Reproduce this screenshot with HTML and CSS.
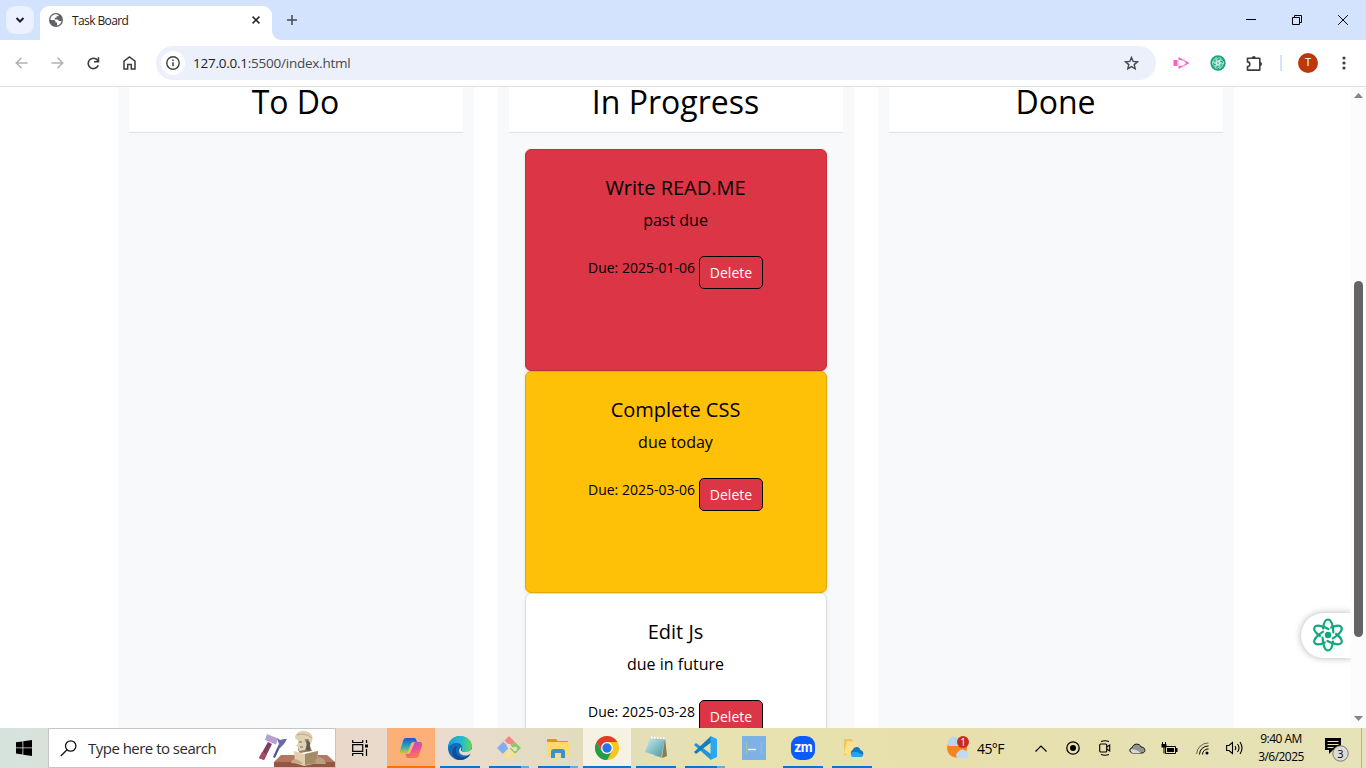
FILE: index.html
```html
<!DOCTYPE html>
<html lang="en">
<head>
<meta charset="utf-8">
<title>Task Board</title>
<link rel="stylesheet" href="styles.css">
</head>
<body>
<header class="tabstrip">
  <button class="tab-search"><svg width="10" height="8" viewBox="0 0 10 8"><path d="M1.500 2l3.500 3.500L8.500 2" fill="none" stroke="#1f2023" stroke-width="2"/></svg></button>
  <div class="tab">
    <svg width="14" height="14" viewBox="0 0 14 14"><circle cx="7" cy="7" r="7" fill="#5f6368"/><path d="M6.300 1.300C3 2 1.300 4.300 1.400 7h3c1.600 0 2.100.8 2.100 1.800v.8H8v3c2.700-.6 4.400-2.600 4.600-5.200-.8.6-1.700.9-2.600.5-.8-.3-.6-1.200-1.400-1.400H5.800V4.800h1.700V3.300h2V2C8.500 1.400 7.300 1.200 6.300 1.300z" fill="#fff"/><path d="M1.500 7.500l3.500 3.300v1.700C3 12 1.700 10 1.500 7.500z" fill="#5f6368"/></svg>
    <span class="tab-title">Task Board</span>
    <svg class="tab-close" width="8" height="8" viewBox="0 0 8 8"><path d="M.6.6l6.800 6.800M7.400.6L.6 7.400" stroke="#1f2023" stroke-width="1.500"/></svg>
  </div>
  <svg class="tab-foot" width="9" height="9"><path d="M0 0a9 9 0 0 0 9 9H0z" fill="#fff"/></svg>
  <svg class="new-tab" width="10" height="10" viewBox="0 0 10 10"><path d="M5 0v10M0 5h10" stroke="#474747" stroke-width="1.500"/></svg>
  <div class="window-controls">
    <span><svg width="10" height="10"><path d="M0 4.500h10" stroke="#000"/></svg></span>
    <span><svg width="10" height="10" fill="none" stroke="#000"><path d="M.5 2.500h7v7h-7zM2.500 2.500v-2h7v7h-2"/></svg></span>
    <span><svg width="10" height="10"><path d="M.2.2l9.600 9.600M9.800.2L.2 9.800" stroke="#000"/></svg></span>
  </div>
</header>
<div class="toolbar">
  <span class="nav-btn"><svg width="13" height="12" viewBox="0 0 13 12" fill="none" stroke="#b0b1b3" stroke-width="1.500"><path d="M12.500 6H1.500M6.500.8L1.300 6l5.200 5.200"/></svg></span>
  <span class="nav-btn"><svg width="13" height="12" viewBox="0 0 13 12" fill="none" stroke="#b0b1b3" stroke-width="1.500"><path d="M.5 6h11M6.500.8L11.700 6l-5.200 5.200"/></svg></span>
  <span class="nav-btn"><svg width="13" height="13" viewBox="0 0 13 13"><path d="M11.300 8.300A5.200 5.200 0 1 1 10.500 3.200L11.800 4.700" fill="none" stroke="#3c3d40" stroke-width="1.600"/><path d="M12.200.3v5.200H7V4h3.600V.3z" fill="#3c3d40"/></svg></span>
  <span class="nav-btn"><svg width="13" height="14" viewBox="0 0 13 14" fill="none" stroke="#3c3d40" stroke-width="1.500"><path d="M1 5.200L6.500 1 12 5.200V13H8.300V8.500H4.700V13H1z"/></svg></span>
  <div class="address">
    <span class="info"><svg width="14" height="14" viewBox="0 0 14 14"><circle cx="7" cy="7" r="6.200" fill="none" stroke="#3c3d40" stroke-width="1.400"/><path d="M7 6.300v4M7 3.500v1.500" stroke="#3c3d40" stroke-width="1.500"/></svg></span>
    <span class="url"><b>127.0.0.1</b>:5500/index.html</span>
    <svg class="star" width="15" height="14" viewBox="0 0 15 14"><path d="M7.500 1.400l1.700 4 4.300.4-3.300 2.800 1 4.200-3.700-2.200-3.700 2.200 1-4.200L1.500 5.800l4.300-.4z" fill="none" stroke="#45474a" stroke-width="1.400"/></svg>
  </div>
  <div class="extensions">
    <svg width="17" height="14" viewBox="0 0 17 14"><path d="M.5 4h4v6h-4z" fill="#fc63c0"/><path d="M5.500.9L16.500 7 5.500 13.100V10H7.500l1.500-.8V4.800L7.500 4h-2z" fill="#fc63c0"/><path d="M8 4.500h2.500L13 7l-2.500 2.500H8z" fill="#fff"/><path d="M4.500 4.600h1.200v4.800H4.500z" fill="#fdb5e0"/></svg>
    <svg width="16" height="16" viewBox="-8 -8 16 16"><circle r="7.700" fill="#19a37f"/><g fill="none" stroke="#d5f3ea" stroke-width=".8"><path id="knot" d="M-1.200 1.800V-3C-1-5.800 3-5.800 4-3.600M-1.200-1.500L3-4"/><use href="#knot" transform="rotate(60)"/><use href="#knot" transform="rotate(120)"/><use href="#knot" transform="rotate(180)"/><use href="#knot" transform="rotate(240)"/><use href="#knot" transform="rotate(300)"/></g></svg>
    <svg width="17" height="17" viewBox="0 0 17 17"><path d="M1.500 3.200h12.300v11.900H1.500v-3.600a2.300 2.300 0 0 0 0-4.600z" fill="none" stroke="#3c3d40" stroke-width="1.600" stroke-linejoin="round"/><path d="M5.800 3a2 2 0 0 1 4 0zM14 7a2 2 0 0 1 0 4z" fill="#3c3d40"/></svg>
  </div>
  <span class="divider"></span>
  <span class="avatar">T</span>
  <svg class="more" width="4" height="14" viewBox="0 0 4 14" fill="#3c3d40"><circle cx="2" cy="2" r="1.600"/><circle cx="2" cy="7" r="1.600"/><circle cx="2" cy="12" r="1.600"/></svg>
</div>
<div class="viewport">
  <main class="board">
    <section class="lane"><h2>To Do</h2></section>
    <section class="lane">
      <h2>In Progress</h2>
      <div class="cards">
        <article class="card overdue"><h4>Write READ.ME</h4><p>past due</p><div class="due"><span>Due: 2025-01-06</span><button>Delete</button></div></article>
        <article class="card today"><h4>Complete CSS</h4><p>due today</p><div class="due"><span>Due: 2025-03-06</span><button>Delete</button></div></article>
        <article class="card"><h4>Edit Js</h4><p>due in future</p><div class="due"><span>Due: 2025-03-28</span><button>Delete</button></div></article>
      </div>
    </section>
    <section class="lane"><h2>Done</h2></section>
    <aside class="assistant"><svg width="34" height="36" viewBox="-17 -18 34 36"><circle r="3.200" fill="#10a77f"/><g fill="none" stroke="#10a77f" stroke-width="2.200" stroke-linecap="round"><path id="orbit" d="M-4.900-6.500C-4.300-12.500-2.500-15.500 0-15.500C3-15.500 5.300-10 5.400-2.500"/><use href="#orbit" transform="rotate(60)"/><use href="#orbit" transform="rotate(120)"/><use href="#orbit" transform="rotate(180)"/><use href="#orbit" transform="rotate(240)"/><use href="#orbit" transform="rotate(300)"/></g></svg></aside>
  </main>
  <div class="scrollbar">
    <svg width="9" height="5"><path d="M0 5L4.500 0 9 5z" fill="#858585"/></svg>
    <span class="thumb"></span>
    <svg width="9" height="5"><path d="M0 0h9L4.500 5z" fill="#858585"/></svg>
  </div>
</div>
<footer class="taskbar">
  <span class="start"><svg width="16" height="16" viewBox="0 0 16 16"><path d="M0 2.300l6.500-.9v6.100H0zM7.300 1.300L16 0v7.500H7.300zM0 8.300h6.500v6.200L0 13.600zM7.300 8.300H16V16l-8.700-1.300z"/></svg></span>
  <div class="search">
    <svg width="17" height="17" viewBox="0 0 17 17" fill="none" stroke="#111" stroke-width="1.300"><circle cx="10.700" cy="6" r="5.200"/><path d="M7 9.700L.8 16"/></svg>
    <span>Type here to search</span>
    <svg class="art" width="78" height="38" viewBox="0 0 78 38"><path d="M11 13l4 2-8 16-5-2z" fill="#7d3e60"/><path d="M5 23l5 2-3 6-5-2z" fill="#a44e61"/><path d="M10 5l11 4.500-2 6-11-4.500z" fill="#b4a1d2"/><path d="M22 15l2 1-6 13-2-1z" fill="#52528f"/><path d="M20 9l3 2 4-1 3 0-3 5-4 4-1-4z" fill="#6b6aa9"/><path d="M24 26h46l8 7H17z" fill="#b5775f"/><path d="M17 33h61v5H17z" fill="#955743"/><path d="M42 10l12 0-1 7 2 5-12 2-2-3z" fill="#8d8069"/><path d="M41 10l6-1 3 7-2 5-6 1-1-4-2-1 2-3z" fill="#dfd2b2"/><path d="M38 9C38 4 43 1 48 2c6 1 9 5 7 10l-1 3-3-5-11 1z" fill="#dfd2b2"/><path d="M40 6q8-3 15 3" fill="none" stroke="#b9a886"/><path d="M50 11l3 3 0 8-4-1z" fill="#625b4e"/><path d="M42 13h3M43 18h3" stroke="#766d5b"/><path d="M37 22l10 3 14-3-1 12-13 3-9-3z" fill="#e1cfac"/><path d="M48 25l13-3-1 12-12 2z" fill="#a28c6b"/><path d="M58 31q5-6 10 1l1 3H59z" fill="#b9a17d"/><path d="M34 34c1-5 7-5 12 1z" fill="#c3ab85"/></svg>
  </div>
  <span class="task-view"><svg width="17" height="16" viewBox="0 0 17 16" fill="none" stroke="#000" stroke-width="1.200"><path d="M.7 0v2.500h10V0M.7 4.700h10v6.600H.7zM.7 16v-2.500h10V16M14.500 0v3M14.500 9v7"/><path d="M13 4.500h3v3h-3z" fill="#000" stroke="none"/></svg></span>
  <nav class="apps">
    <span class="app copilot"><svg width="24" height="24" viewBox="0 0 24 24"><defs><linearGradient id="c1" x2="0" y2="1"><stop stop-color="#1b55d5"/><stop offset=".5" stop-color="#23a5bd"/><stop offset="1" stop-color="#e9c52e"/></linearGradient><linearGradient id="c2" x2=".3" y2="1"><stop stop-color="#a44bd7"/><stop offset=".6" stop-color="#ec5295"/><stop offset="1" stop-color="#f77952"/></linearGradient></defs><path d="M7 2h8c2 0 2.500 2 3 4h-3c-2 0-3 1-3.500 3L9 16c-.6 2-1 2-3 2H3C1 18 .7 16 1.200 14L4 5c.6-2 1.500-3 3-3z" fill="url(#c1)"/><path d="M17 22H9c-1.500 0-2-2-2.500-4H9c2 0 2.500-1 3-3l3-7c.6-2 1-2 3-2h3c2 0 2.300 2 2 4l-3 9c-.6 2-1.500 3-3 3z" fill="url(#c2)"/></svg></span>
    <span class="app run"><svg width="24" height="24" viewBox="0 0 24 24"><defs><linearGradient id="e1"><stop stop-color="#159ddc"/><stop offset=".6" stop-color="#29bec9"/><stop offset="1" stop-color="#68d84c"/></linearGradient></defs><circle cx="12" cy="12" r="12" fill="#126cbd"/><path d="M0 11C1 4 6 0 12 0c7 0 12 5 12 10 0 4-3 6-7 6-3 0-4-1-3-3 1-3-1-6-5-6-4 0-8 2-9 5z" fill="url(#e1)"/><path d="M9 10c-3 5 0 12 8 11l5-2c-4 5-10 6-14 4-6-4-4-12 1-13z" fill="#104d91"/><path d="M13.500 11c-1.500 3-.5 5 3.500 5 3 0 5-1 7-3v4l-2 1c-2 1-3 1.500-5 1.500-6 0-8-6-3.500-8.500z" fill="#e9d9c9"/></svg></span>
    <span class="app run multi"><svg width="24" height="24" viewBox="-12 -12 24 24"><path d="M0-12l6 6-6 6-6-6z" fill="#f48584"/><path d="M-6-6l6 6-6 6-6-6z" fill="#80adf4"/><path d="M6-6l6 6-6 6-6-6z" fill="#88cb62"/><path d="M0 0l6 6-6 6-6-6z" fill="#fee17f"/><path d="M-5-7l5 5v8M0-2l5 3" fill="none" stroke="#eadfce" stroke-width="1.500"/><g fill="#eadfce"><circle cy="-2" r="2.200"/><circle cy="6" r="2.200"/><circle cx="6" cy="1" r="2.200"/></g></svg></span>
    <span class="app run multi"><svg width="22" height="20" viewBox="0 0 22 20"><path d="M0 1h9l2 2h10v5H0z" fill="#d99c10"/><path d="M0 4h22v14H0z" fill="#ffd96b"/><path d="M4 20v-6c0-2 1-3 3-3h8c2 0 3 1 3 3v6h-4v-5H8v5z" fill="#3692d2"/></svg></span>
    <span class="app run active"><svg width="24" height="24" viewBox="-12 -12 24 24"><circle r="12" fill="#f9c51d"/><path d="M-10.400-6A12 12 0 0 1 10.400-6H0L-5.200 3z" fill="#e23b2f"/><path d="M-10.400-6A12 12 0 0 0 0 12L5.200 3-5.200 3z" fill="#249c4b"/><circle r="6" fill="#fff"/><circle r="4.700" fill="#2877e6"/></svg></span>
    <span class="app run"><svg width="24" height="24" viewBox="0 0 24 24"><defs><linearGradient id="n1" x2="1" y2="1"><stop stop-color="#d3ebe8"/><stop offset="1" stop-color="#3e98a8"/></linearGradient></defs><path d="M21 3l2 17-5 2-8-2z" fill="#c9bd94"/><path d="M6 2l15 1-4 18L1 16z" fill="url(#n1)"/><path d="M21 3l2 17-5 2z" fill="#867d5b"/><path d="M7 1.500l14 1" stroke="#fff" stroke-dasharray="1.500" stroke-width="2"/></svg></span>
    <span class="app run multi"><svg width="24" height="24" viewBox="0 0 24 24"><path d="M1 9l2-2L18 18v6z" fill="#2195db"/><path d="M18 0v6.500L3 18l-2-2z" fill="#147fbd"/><path d="M17.500 0L24 3v18l-6.500 3z" fill="#2ba8ef"/></svg></span>
    <span class="app"><svg width="24" height="24" viewBox="0 0 24 24"><path d="M0 0h24v24H0z" fill="#7eb2e6"/><path d="M4.500 6v12M19.500 6v12" stroke="#a2c4a1"/><path d="M6 13.500h8" stroke="#edf5ff" stroke-width="1.500"/></svg></span>
    <span class="app run"><span class="zoom-logo">zm</span></span>
    <span class="app run"><svg class="od" width="20" height="20" viewBox="0 0 20 20"><path d="M0 1h8l1 3h3v13H0z" fill="#efc45a"/><path d="M3 3l9 1v13l-7 1-5-3z" fill="#ffe091"/><path d="M10 19a4 4 0 0 1-1-7.500c2-4 7-2.500 7.300.5 4 .5 4 7 0 7z" fill="#0f78cc"/><path d="M7 17c0-4 6-4 9-1 3-1 4 2 1 3H9c-1 0-2-1-2-2z" fill="#2aa4ed"/></svg></span>
  </nav>
  <div class="tray">
    <span class="weather"><svg width="26" height="24" viewBox="0 0 26 24"><circle cx="12" cy="12" r="10" fill="#f48522"/><path d="M4 10a4 4 0 0 1 1-7 5 5 0 0 1 9 1l2 6z" fill="#b6d5f3"/><path d="M12 22a4 4 0 0 1 1-6 5 5 0 0 1 8-1 4 4 0 0 1 1 7z" fill="#bfdaf2"/><circle cx="18" cy="6" r="6" fill="#c92b1e"/><text x="18" y="10" text-anchor="middle" fill="#fff" font-size="10">1</text></svg></span>
    <span class="temp">45°F</span>
    <span class="tray-icon"><svg width="12" height="7" fill="none" stroke="#000" stroke-width="1.200"><path d="M.5 6.500L6 1l5.500 5.500"/></svg></span>
    <span class="tray-icon"><svg width="14" height="14" viewBox="0 0 14 14"><circle cx="7" cy="7" r="6.200" fill="none" stroke="#000" stroke-width="1.300"/><circle cx="7" cy="7" r="3"/></svg></span>
    <span class="tray-icon"><svg width="12" height="16" viewBox="0 0 12 16" fill="none" stroke="#000" stroke-width="1.100"><rect x=".7" y="4" width="7" height="8" rx="1"/><path d="M7.700 7l3-2v6l-3-2M2 1.500q4-1.500 8 0M2 14.500q4 1.500 8 0"/></svg></span>
    <span class="tray-icon"><svg width="17" height="11" viewBox="0 0 17 11"><path d="M4 10C0 10 0 5 3 5c1-5 8-5 9-1 5 0 5 6 1 6z" fill="#92948f" stroke="#161616"/><path d="M2 6q5 0 10 4H4Q1 9 2 6z" fill="#d7d8d1"/></svg></span>
    <span class="tray-icon"><svg width="17" height="13" viewBox="0 0 17 13"><path d="M4.500 4.500h10v7h-10z" fill="none" stroke="#000"/><path d="M6 6h7v4H6zM15 6h1.500v4H15zM.5 2h5v3.500h-2v6h-1v-6h-2zM1 0h1v2H1zM4 0h1v2H4z"/></svg></span>
    <span class="tray-icon wifi"><svg width="13" height="13" viewBox="0 0 13 13" fill="none" stroke="#000"><path d="M.6 12A11.500 11.500 0 0 1 12.500 1" stroke-opacity=".55"/><path d="M3.500 12.500a8.500 8.500 0 0 1 9-8.500M6.500 12.500a5.500 5.500 0 0 1 6-5.500"/><circle cx="11" cy="11" r="1.500" fill="#000" stroke="none"/></svg></span>
    <span class="tray-icon volume"><svg width="17" height="14" viewBox="0 0 17 14" fill="none" stroke="#000" stroke-width="1.100"><path d="M.6 4.500H3l3.500-3v11L3 9.500H.6zM9 5q1.500 2 0 4M11.500 3q3 4 0 8M14 1q4 6 0 12"/></svg></span>
    <span class="clock"><span>9:40 AM</span><span>3/6/2025</span></span>
    <span class="notice"><svg width="26" height="26" viewBox="0 0 26 26"><path d="M1 2h16v12H9l-4 4v-4H1z"/><path d="M3.500 5.500h11M3.500 8.500h11M3.500 11.500h6" stroke="#e6e2b7"/><circle cx="16.500" cy="17.500" r="7.700" fill="#dcdcd4" stroke="#777"/><text x="16.500" y="21.500" text-anchor="middle" font-size="11">3</text></svg></span>
  </div>
</footer>
</body>
</html>
```
FILE: styles.css
```css
* { box-sizing: border-box; }
body { margin: 0; width: 1366px; height: 768px; overflow: hidden; display: flex; flex-direction: column; background: #fff; color: #000; font-family: "Open Sans", sans-serif; }
svg { display: block; flex: none; }
button { font: inherit; border: 0; padding: 0; }

.tabstrip { height: 40px; flex: none; display: flex; align-items: center; background: #d3e2fd; padding-left: 6px; }
.tab-search { width: 28px; height: 28px; border-radius: 9px; background: #ebf1fe; display: grid; place-items: center; }
.tab { align-self: flex-end; width: 232px; height: 34px; margin-left: 6px; padding: 0 12px 6px 9px; display: flex; align-items: center; background: #fff; border-radius: 9px 9px 0 0; }
.tab-title { margin-left: 9px; padding-top: 1px; font-size: 12px; letter-spacing: -.6px; color: #1f2023; }
.tab-close { margin-left: auto; }
.tab-foot { align-self: flex-end; }
.new-tab { margin-left: 6px; }
.window-controls { margin-left: auto; display: flex; }
.window-controls span { width: 46px; height: 40px; display: grid; place-items: center; }

.toolbar { height: 47px; flex: none; display: flex; align-items: center; background: #fff; border-bottom: 1px solid #dfe1df; padding-left: 4px; }
.nav-btn { width: 36px; display: grid; place-items: center; }
.nav-btn svg { margin-right: 1px; }
.address { width: 1000px; height: 34px; margin-left: 8px; padding: 0 17px 0 5px; display: flex; align-items: center; border-radius: 17px; background: #ecf0fa; }
.info { width: 24px; height: 24px; border-radius: 50%; background: #fff; display: grid; place-items: center; }
.url { margin-left: 8px; font-size: 13.5px; letter-spacing: -.24px; color: #47494d; }
.url b { font-weight: 400; color: #1f2023; }
.star { margin-left: auto; }
.extensions { display: flex; align-items: center; gap: 20px; margin-left: 17px; }
.divider { width: 2px; height: 16px; margin-left: 17px; background: #d3e2fd; }
.avatar { width: 20px; height: 20px; margin-left: 16px; border-radius: 50%; background: #bf360c; color: #fff; font: 11px/20px Roboto, sans-serif; text-align: center; }
.more { margin-left: 24px; }

.viewport { height: 641px; flex: none; display: flex; overflow: hidden; }
.board { position: relative; width: 1351px; height: 641px; padding-left: 118px; display: flex; gap: 24px; overflow: hidden; }
.lane { width: 356px; height: 641px; padding: 0 11px; background: #f8f9fb; }
.lane h2 { margin: 0; height: 46px; padding-right: 1px; background: #fff; border-bottom: 1px solid #dee2e6; font-size: 32px; line-height: 30px; font-weight: 400; text-align: center; }
.cards { padding: 16px; }
.card { height: 222px; padding: 26px 17px 0 16px; border: 1px solid #dfdfdf; border-radius: 6px; background: #fff; box-shadow: 0 2px 4px #00000013; text-align: center; }
.overdue { background: #dc3545; border-color: #c12f3d; }
.today { background: #ffc107; border-color: #e0aa06; }
.card h4 { margin: 0 0 8px; font-size: 20px; line-height: 24px; font-weight: 400; }
.card p { margin: 0 0 24px; font-size: 16px; line-height: 24px; }
.due { display: flex; justify-content: center; gap: 4px; font-size: 14px; line-height: 24px; }
.due button { width: 64px; height: 33px; border: 1px solid #000; border-radius: 5px; background: #dc3545; color: #fff; }
.assistant { position: absolute; right: 0; top: 526px; width: 50px; height: 45px; padding: 4px 0 0 10px; border-radius: 23px 0 0 23px; background: #fff; box-shadow: 0 0 7px #0000004d; }
.scrollbar { width: 15px; height: 641px; padding: 6px 0 7px; background: #fcfcfc; display: flex; flex-direction: column; align-items: center; }
.thumb { width: 9px; height: 356px; margin: 183px 0 auto; border-radius: 5px; background: #646464; }

.taskbar { height: 40px; flex: none; display: flex; background: linear-gradient(90deg, #d5e3dd 0, #ead9cb 340px, #e8dccb 480px, #e2dcbd 580px, #e7e2b0 720px, #e7e0ac 920px, #e6e2b9); }
.start { width: 48px; display: grid; place-items: center; }
.search { width: 288px; padding-left: 11px; border: 1px solid #c5c5c5; background: #fff; display: flex; align-items: center; font-size: 15px; letter-spacing: -.52px; color: #2b2b2b; }
.search span { margin-left: 11px; white-space: nowrap; }
.art { margin-left: auto; }
.task-view { width: 51px; padding-right: 2px; display: grid; place-items: center; }
.apps { display: flex; gap: 1px; }
.app { width: 48px; height: 40px; display: grid; place-items: center; background: no-repeat 4px 38px / 40px 2px; }
.run { background-image: linear-gradient(#0078d7, #0078d7); }
.multi { background-image: linear-gradient(90deg, #0078d7 32px, #64ace0 32px); }
.copilot { background: linear-gradient(#fcb077 38px, #ff7200 38px); }
.active { background: linear-gradient(#f5f2e4 38px, #0078d7 38px); }
.od { margin-left: 4px; }
.zoom-logo { width: 24px; height: 24px; border-radius: 9px; background: #0b5cff; color: #fff; font: 700 13px/22px Inter, sans-serif; letter-spacing: -.6px; text-align: center; }
.tray { margin-left: auto; display: flex; align-items: center; }
.weather { width: 32px; }
.temp { width: 48px; font-size: 14px; letter-spacing: -.6px; }
.tray-icon { width: 32px; display: grid; place-items: center; }
.wifi { width: 34px; }
.volume { width: 30px; }
.clock { width: 64px; display: flex; flex-direction: column; align-items: center; font-size: 12px; line-height: 18px; letter-spacing: -.55px; }
.notice { width: 49px; height: 40px; padding: 8px 0 0 11px; border-right: 1px solid #b5b395; margin-right: 4px; }
```
